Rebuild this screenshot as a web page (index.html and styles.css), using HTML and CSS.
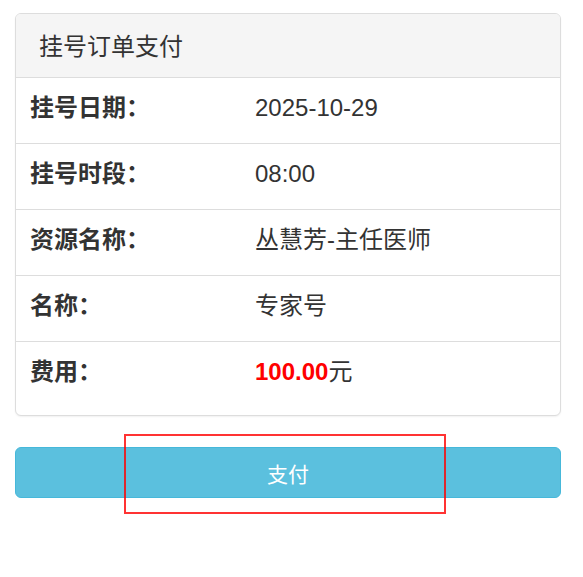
FILE: index.html
```html
<!DOCTYPE html>
<html lang="zh-CN">
<head>
<meta charset="utf-8">
<title>挂号订单支付</title>
<link rel="stylesheet" href="styles.css">
</head>
<body>
<div class="page">
  <div class="panel">
    <div class="panel-heading">挂号订单支付</div>
    <div class="row">
      <div class="label">挂号日期：</div>
      <div class="value">2025-10-29</div>
    </div>
    <div class="row">
      <div class="label">挂号时段：</div>
      <div class="value">08:00</div>
    </div>
    <div class="row">
      <div class="label">资源名称：</div>
      <div class="value">丛慧芳-主任医师</div>
    </div>
    <div class="row">
      <div class="label">名称：</div>
      <div class="value">专家号</div>
    </div>
    <div class="row row-last">
      <div class="label">费用：</div>
      <div class="value"><span class="price">100.00</span>元</div>
    </div>
  </div>
  <button class="btn-pay" type="button">支付</button>
  <div class="highlight"></div>
</div>
</body>
</html>
```

FILE: styles.css
```css
html, body {
  margin: 0;
  padding: 0;
  background: #fff;
}
body {
  font-family: "Liberation Sans", "Noto Sans CJK SC", sans-serif;
  color: #333;
  font-size: 24px;
  line-height: 34px;
}
.page {
  position: relative;
  box-sizing: border-box;
  min-height: 577px;
  padding: 13px 22px 0 15px;
}
.panel {
  border: 1px solid #ddd;
  border-radius: 6px;
  box-shadow: 0 1px 2px rgba(0, 0, 0, 0.06);
  overflow: hidden;
  background: #fff;
}
.panel-heading {
  background: #f5f5f5;
  border-bottom: 1px solid #ddd;
  padding: 16px 23px 13px;
  color: #333;
}
.row {
  display: flex;
  padding: 13px 14px 18px;
  border-top: 1px solid #ddd;
}
.panel-heading + .row {
  border-top: none;
}
.row-last {
  padding-bottom: 26px;
}
.label {
  width: 225px;
  flex: none;
  font-weight: bold;
}
.value {
  flex: 1;
}
.price {
  color: #ff0000;
  font-weight: bold;
}
.btn-pay {
  display: flex;
  align-items: center;
  justify-content: center;
  width: 546px;
  height: 51px;
  margin-top: 31px;
  padding: 0;
  background: #5bc0de;
  border: 1px solid #46b8da;
  border-radius: 6px;
  color: #fff;
  font-family: "Liberation Sans", "Noto Sans CJK SC", sans-serif;
  font-size: 21px;
}
.highlight {
  position: absolute;
  left: 124px;
  top: 434px;
  width: 318px;
  height: 76px;
  border: 2px solid rgba(255, 0, 0, 0.8);
  pointer-events: none;
  z-index: 2;
}
```
